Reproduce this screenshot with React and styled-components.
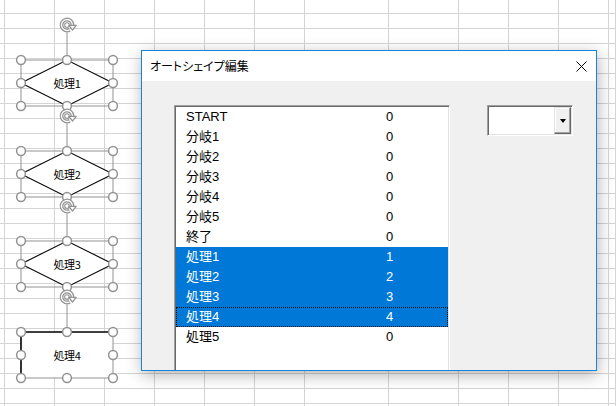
import React from 'react';
import styled, { createGlobalStyle } from 'styled-components';

const GlobalStyle = createGlobalStyle`
  html, body { margin: 0; padding: 0; background: #fff; }
  body { font-family: "Liberation Sans", "Noto Sans CJK JP", sans-serif; }
  #root { width: 616px; height: 406px; }
`;

const COLS = [5, 50, 50, 50, 50, 50, 50, 84, 70, 50, 50, 50, 7];
const ROWS = [14, ...Array(27).fill(15)];

const Workbook = styled.div`
  position: relative;
  width: 616px;
  height: 406px;
  overflow: hidden;
  background: #fff;
`;

const SheetGrid = styled.div`
  display: grid;
  grid-template-columns: ${COLS.map((c) => c + 'px').join(' ')};
  grid-template-rows: ${ROWS.map((r) => r + 'px').join(' ')};
`;

const Cell = styled.div`
  box-sizing: border-box;
  border-right: 1px solid #d4d4d4;
  border-bottom: 1px solid #d4d4d4;
`;

/* ---------- shapes on the sheet canvas ---------- */
const ShapeFrame = styled.div`
  position: absolute;
  left: 21px;
  top: ${(p) => p.$top}px;
  width: 92px;
  height: 46px;
  display: flex;
  align-items: center;
  justify-content: center;
`;

const ShapeArt = styled.svg`
  position: absolute;
  left: -10px;
  top: -45px;
  width: 112px;
  height: 101px;
  overflow: visible;
`;

const ShapeLabel = styled.span`
  position: relative;
  font: 400 11px/1 "Noto Sans CJK JP", sans-serif;
  color: #000;
  letter-spacing: -0.3px;
`;

const HANDLE = '#929292';
const HANDLES = [
  [0, 0], [46, 0], [92, 0],
  [0, 23], [92, 23],
  [0, 46], [46, 46], [92, 46],
];

function RotateHandle() {
  return (
    <g transform="translate(46,-35)">
      <path d="M5.5,0 A5.5,5.5 0 1 0 2.75,4.76" fill="none" stroke={HANDLE} strokeWidth="3.8" />
      <path d="M5.5,0 A5.5,5.5 0 1 0 2.75,4.76" fill="none" stroke="#fff" strokeWidth="1.3" />
      <circle cx="0" cy="0" r="2.3" fill="none" stroke={HANDLE} strokeWidth="1.1" />
      <polygon points="1.8,0.4 9.2,0.4 5.5,5" fill="#fff" stroke={HANDLE} strokeWidth="1.2" strokeLinejoin="round" />
    </g>
  );
}

function Shape({ top, kind, label }) {
  return (
    <ShapeFrame $top={top}>
      <ShapeArt viewBox="-10 -45 112 101">
        <line x1="46" y1="-27.5" x2="46" y2="-4" stroke={HANDLE} strokeWidth="1" />
        <RotateHandle />
        {kind === 'diamond' ? (
          <>
            <rect x="0" y="0" width="92" height="46" fill="none" stroke={HANDLE} strokeWidth="1" />
            <polygon points="0,23 46,0 92,23 46,46" fill="#fff" stroke="#000" strokeWidth="1.1" />
          </>
        ) : (
          <>
            <rect x="0" y="0" width="92" height="46" fill="#fff" stroke="none" />
            <path d="M92,0 L92,46 L0,46" fill="none" stroke={HANDLE} strokeWidth="1" />
            <path d="M0,46 L0,0 L92,0" fill="none" stroke="#000" strokeWidth="1.6" />
          </>
        )}
        {HANDLES.map(([x, y]) => (
          <circle key={x + '-' + y} cx={x} cy={y} r="4.4" fill="#fff" stroke={HANDLE} strokeWidth="1.5" />
        ))}
      </ShapeArt>
      <ShapeLabel>{label}</ShapeLabel>
    </ShapeFrame>
  );
}

/* ---------- dialog window ---------- */
const Dialog = styled.section`
  position: absolute;
  left: 141px;
  top: 50px;
  width: 456px;
  height: 321px;
  box-sizing: border-box;
  border: 1px solid #1883d7;
  background: #f0f0f0;
  display: flex;
  flex-direction: column;
  overflow: hidden;
  box-shadow: 1px 4px 15px rgba(0, 0, 0, 0.3);
`;

const TitleBar = styled.header`
  height: 30px;
  flex: none;
  background: #fff;
  display: flex;
  align-items: center;
  justify-content: space-between;
  padding: 0 9px 0 8px;
`;

const Title = styled.h1`
  margin: 0;
  font: 400 12px/1 "Noto Sans CJK JP", sans-serif;
  font-feature-settings: "palt";
  color: #000;
`;

const CloseButton = styled.div`
  width: 11px;
  height: 11px;
  display: flex;
`;

const Body = styled.div`
  flex: 1;
  display: flex;
  align-items: flex-start;
  gap: 37px;
  padding: 24px 0 0 32px;
`;

const ListBox = styled.ul`
  list-style: none;
  margin: 0;
  padding: 1px;
  flex: none;
  width: 276px;
  height: 290px;
  box-sizing: border-box;
  background: #fff;
  border: 1px solid;
  border-color: #a0a0a0 #fff #fff #a0a0a0;
  box-shadow: inset 1px 1px 0 #696969, inset -1px -1px 0 #e3e3e3;
`;

const Row = styled.li`
  display: grid;
  grid-template-columns: 200px 1fr;
  height: 20px;
  align-items: center;
  padding-left: 10px;
  box-sizing: border-box;
  font: 400 13px/20px "Liberation Sans", "Noto Sans CJK JP", sans-serif;
  background: ${(p) => (p.$selected ? '#0078d7' : 'transparent')};
  color: ${(p) => (p.$selected ? '#fff' : '#000')};
  outline: ${(p) => (p.$focused ? '1px dotted #111' : 'none')};
  outline-offset: -1px;
`;

const Combo = styled.div`
  flex: none;
  width: 86px;
  height: 31px;
  box-sizing: border-box;
  padding: 1px;
  background: #fff;
  border: 1px solid;
  border-color: #a0a0a0 #fff #fff #a0a0a0;
  box-shadow: inset 1px 1px 0 #696969, inset -1px -1px 0 #e3e3e3;
  display: flex;
  justify-content: flex-end;
`;

const DropButton = styled.div`
  width: 17px;
  box-sizing: border-box;
  background: #f0f0f0;
  border-top: 1px solid #e3e3e3;
  border-left: 1px solid #e3e3e3;
  border-right: 1px solid #696969;
  border-bottom: 1px solid #696969;
  box-shadow: inset -1px -1px 0 #a0a0a0, inset 1px 1px 0 #fff;
  display: flex;
  align-items: center;
  justify-content: center;
`;

const Arrow = styled.span`
  width: 0;
  height: 0;
  border-left: 3.5px solid transparent;
  border-right: 3.5px solid transparent;
  border-top: 4px solid #000;
`;

const ITEMS = [
  ['START', 0], ['分岐1', 0], ['分岐2', 0], ['分岐3', 0], ['分岐4', 0], ['分岐5', 0],
  ['終了', 0], ['処理1', 1], ['処理2', 2], ['処理3', 3], ['処理4', 4], ['処理5', 0],
];

const SHAPES = [
  { top: 60, kind: 'diamond', label: '処理1' },
  { top: 151, kind: 'diamond', label: '処理2' },
  { top: 241, kind: 'diamond', label: '処理3' },
  { top: 332, kind: 'rect', label: '処理4' },
];

export default function App() {
  return (
    <>
      <GlobalStyle />
      <Workbook>
        <SheetGrid>
          {ROWS.map((_, r) => COLS.map((__, c) => <Cell key={r + '-' + c} />))}
        </SheetGrid>
        {SHAPES.map((s) => (
          <Shape key={s.label} {...s} />
        ))}
        <Dialog>
          <TitleBar>
            <Title>オートシェイプ編集</Title>
            <CloseButton>
              <svg width="11" height="11" viewBox="0 0 11 11">
                <path d="M0.5,0.5 L10.5,10.5 M10.5,0.5 L0.5,10.5" stroke="#000" strokeWidth="1" />
              </svg>
            </CloseButton>
          </TitleBar>
          <Body>
            <ListBox>
              {ITEMS.map(([name, val], i) => (
                <Row key={name} $selected={i >= 7 && i <= 10} $focused={i === 10}>
                  <span>{name}</span>
                  <span>{val}</span>
                </Row>
              ))}
            </ListBox>
            <Combo>
              <DropButton>
                <Arrow />
              </DropButton>
            </Combo>
          </Body>
        </Dialog>
      </Workbook>
    </>
  );
}
